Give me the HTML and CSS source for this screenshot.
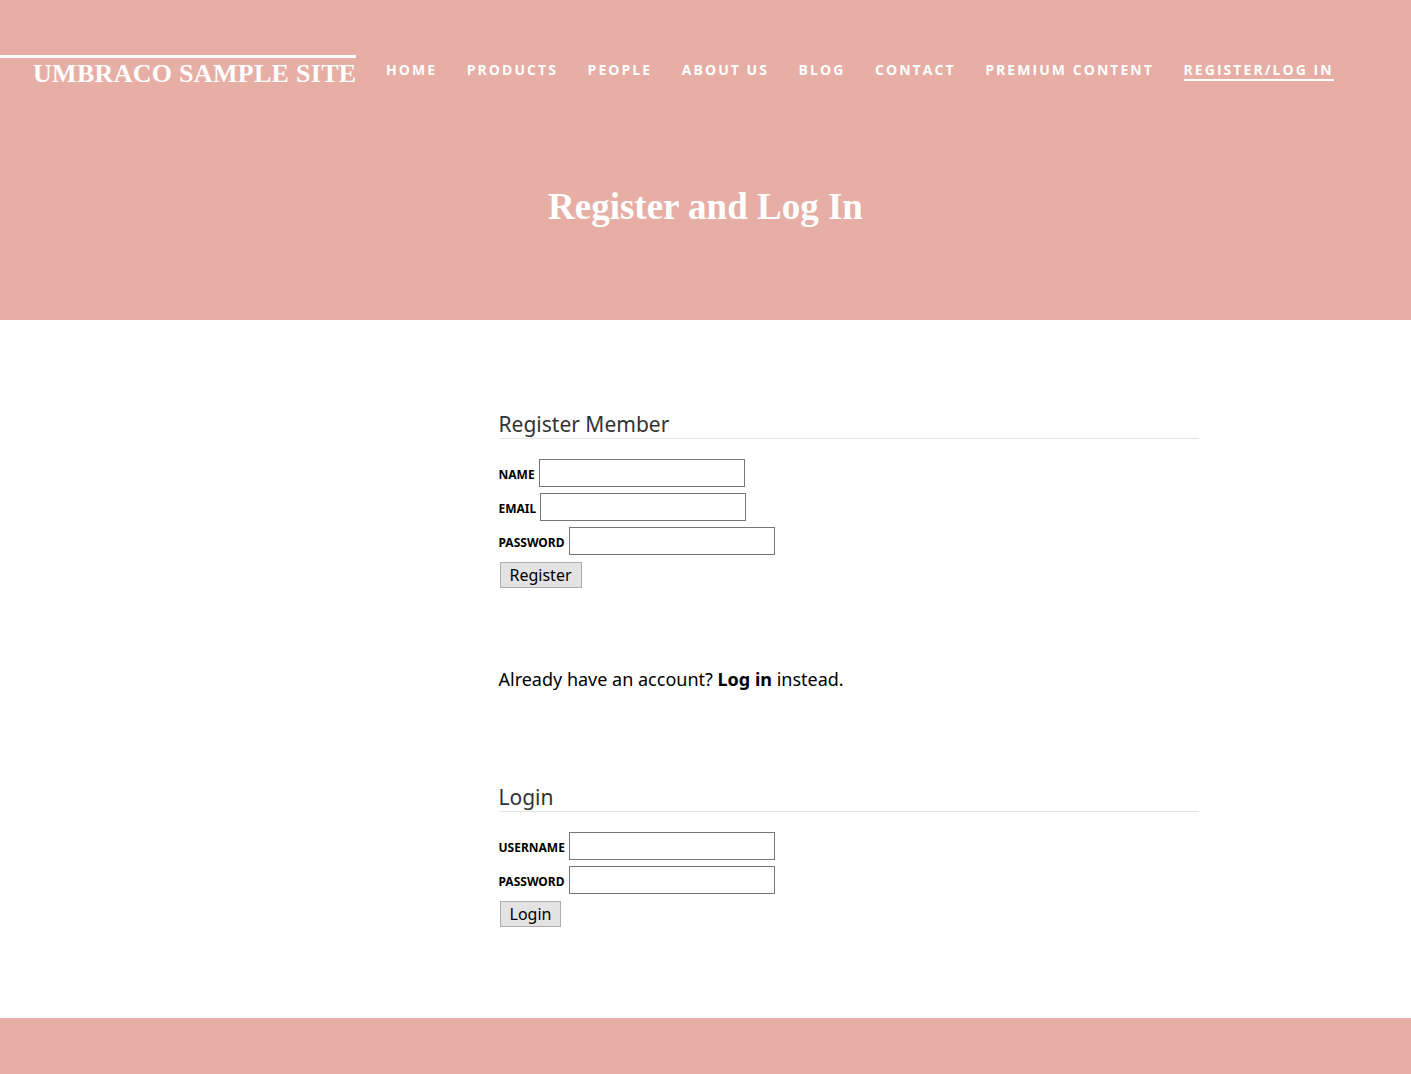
FILE: index.html
```html
<!DOCTYPE html>
<html>
<head>
<meta charset="utf-8">
<link rel="stylesheet" href="styles.css">
</head>
<body>
<header class="hero">
  <div class="topbar">
    <a class="logo" href="#">Umbraco Sample Site</a>
    <nav class="nav">
      <a href="#">Home</a>
      <a href="#">Products</a>
      <a href="#">People</a>
      <a href="#">About Us</a>
      <a href="#">Blog</a>
      <a href="#">Contact</a>
      <a href="#">Premium Content</a>
      <a href="#" class="active">Register/Log In</a>
    </nav>
  </div>
  <h1 class="title">Register and Log In</h1>
</header>
<main class="content">
  <section class="block">
    <h2 class="block-title">Register Member</h2>
    <form class="form">
      <div class="row"><label>Name</label> <input type="text"></div>
      <div class="row"><label>Email</label> <input type="text"></div>
      <div class="row"><label>Password</label> <input type="password"></div>
      <div class="row"><button type="button">Register</button></div>
    </form>
  </section>
  <p class="already">Already have an account? <b>Log in</b> instead.</p>
  <section class="block login">
    <h2 class="block-title">Login</h2>
    <form class="form">
      <div class="row"><label>Username</label> <input type="text"></div>
      <div class="row"><label>Password</label> <input type="password"></div>
      <div class="row"><button type="button">Login</button></div>
    </form>
  </section>
</main>
<footer class="footer"></footer>
</body>
</html>
```
FILE: styles.css
```css
html, body { margin: 0; padding: 0; }
body {
  font-family: "Noto Sans", "Open Sans", sans-serif;
  color: #000;
  background: #fff;
}
.hero {
  background: #e6aea4;
  height: 320px;
  box-sizing: border-box;
  padding-top: 55px;
}
.topbar {
  display: flex;
  align-items: flex-start;
}
.logo {
  display: block;
  flex: none;
  border-top: 3px solid #fff;
  width: 356px;
  box-sizing: border-box;
  padding: 2px 0 0 33px;
  color: #fff;
  text-decoration: none;
  font-family: "Liberation Serif", "DejaVu Serif", serif;
  font-weight: bold;
  font-size: 26px;
  line-height: 28px;
  letter-spacing: 0.3px;
  text-transform: uppercase;
  white-space: nowrap;
}
.nav {
  display: flex;
  gap: 29.6px;
  margin-left: 30px;
  padding-top: 6px;
}
.nav a {
  color: #fff;
  text-decoration: none;
  font-family: "Open Sans", "Noto Sans", sans-serif;
  font-weight: bold;
  font-size: 14px;
  letter-spacing: 2.05px;
  text-transform: uppercase;
  line-height: 18px;
  padding-bottom: 0;
  white-space: nowrap;
}
.nav a.active {
  border-bottom: 2px solid #fff;
}
.title {
  margin: 94px 0 0;
  text-align: center;
  color: #fff;
  font-family: "Liberation Serif", "DejaVu Serif", serif;
  font-weight: bold;
  font-size: 37px;
  line-height: 50px;
}
.content {
  width: 700px;
  margin: 0 auto;
  padding: 90px 0 84px;
  position: relative;
  left: 143px;
}
.block-title {
  margin: 0 0 20px;
  font-weight: normal;
  font-size: 21px;
  line-height: 28px;
  color: #333;
  border-bottom: 1px solid #e5e5e5;
}
.row {
  margin-bottom: 6px;
  height: 28px;
  display: flex;
  align-items: center;
}
label {
  font-weight: bold;
  font-size: 12px;
  text-transform: uppercase;
  margin-right: 4px;
  position: relative;
  top: 1px;
}
input {
  width: 206px;
  height: 28px;
  box-sizing: border-box;
  border: 1px solid #767676;
  padding: 0;
  margin: 0;
  font-family: inherit;
}
button {
  font-family: inherit;
  font-size: 16px;
  background: #e3e3e3;
  border: 1px solid #adadad;
  height: 26px;
  padding: 0 9px;
  margin-left: 1px;
  color: #000;
}
.already {
  margin: 78px 0 92px;
  font-size: 18px;
}
.footer {
  background: #e6aea4;
  height: 56px;
}
```
